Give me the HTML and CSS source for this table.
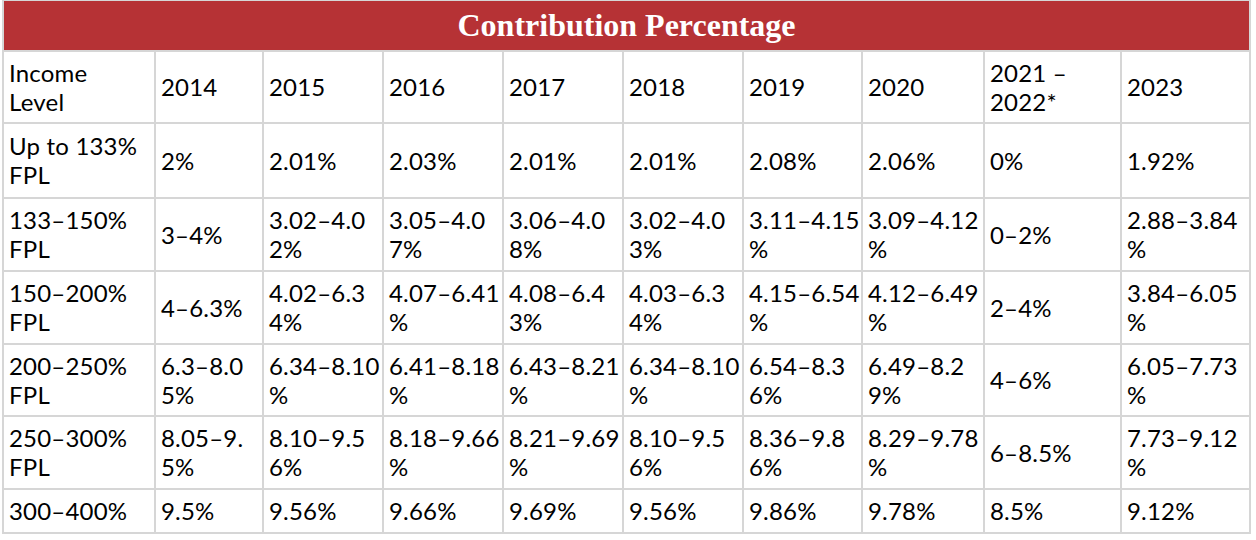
FILE: index.html
```html
<!DOCTYPE html>
<html lang="en">
<head>
<meta charset="utf-8">
<title>Contribution Percentage</title>
<link rel="stylesheet" href="styles.css">
</head>
<body>
<table class="contrib">
  <colgroup>
    <col class="c-label">
    <col class="c-108">
    <col class="c-120"><col class="c-120"><col class="c-120"><col class="c-120">
    <col class="c-119">
    <col class="c-122">
    <col class="c-137">
    <col class="c-129">
  </colgroup>
  <thead>
    <tr class="r-title"><th colspan="10" class="title">Contribution Percentage</th></tr>
  </thead>
  <tbody>
    <tr class="r-head">
      <td>Income<br>Level</td><td>2014</td><td>2015</td><td>2016</td><td>2017</td><td>2018</td><td>2019</td><td>2020</td><td>2021 –<br>2022*</td><td>2023</td>
    </tr>
    <tr class="r-2">
      <td>Up to 133%<br>FPL</td><td>2%</td><td>2.01%</td><td>2.03%</td><td>2.01%</td><td>2.01%</td><td>2.08%</td><td>2.06%</td><td>0%</td><td>1.92%</td>
    </tr>
    <tr class="r-3">
      <td>133–150%<br>FPL</td><td>3–4%</td><td>3.02–4.0<br>2%</td><td>3.05–4.0<br>7%</td><td>3.06–4.0<br>8%</td><td>3.02–4.0<br>3%</td><td>3.11–4.15<br>%</td><td>3.09–4.12<br>%</td><td>0–2%</td><td>2.88–3.84<br>%</td>
    </tr>
    <tr class="r-4">
      <td>150–200%<br>FPL</td><td>4–6.3%</td><td>4.02–6.3<br>4%</td><td>4.07–6.41<br>%</td><td>4.08–6.4<br>3%</td><td>4.03–6.3<br>4%</td><td>4.15–6.54<br>%</td><td>4.12–6.49<br>%</td><td>2–4%</td><td>3.84–6.05<br>%</td>
    </tr>
    <tr class="r-5">
      <td>200–250%<br>FPL</td><td>6.3–8.0<br>5%</td><td>6.34–8.10<br>%</td><td>6.41–8.18<br>%</td><td>6.43–8.21<br>%</td><td>6.34–8.10<br>%</td><td>6.54–8.3<br>6%</td><td>6.49–8.2<br>9%</td><td>4–6%</td><td>6.05–7.73<br>%</td>
    </tr>
    <tr class="r-6">
      <td>250–300%<br>FPL</td><td>8.05–9.<br>5%</td><td>8.10–9.5<br>6%</td><td>8.18–9.66<br>%</td><td>8.21–9.69<br>%</td><td>8.10–9.5<br>6%</td><td>8.36–9.8<br>6%</td><td>8.29–9.78<br>%</td><td>6–8.5%</td><td>7.73–9.12<br>%</td>
    </tr>
    <tr class="r-7">
      <td>300–400%</td><td>9.5%</td><td>9.56%</td><td>9.66%</td><td>9.69%</td><td>9.56%</td><td>9.86%</td><td>9.78%</td><td>8.5%</td><td>9.12%</td>
    </tr>
  </tbody>
</table>
</body>
</html>
```

FILE: styles.css
```css
html, body {
  margin: 0;
  padding: 0;
  background: #ffffff;
}

.contrib {
  margin: 0 0 0 2px;
  width: 1249px;
  table-layout: fixed;
  border-collapse: collapse;
  font-family: "Lato", "Liberation Sans", sans-serif;
  font-size: 24px;
  letter-spacing: 0.2px;
  line-height: 29px;
  color: #000000;
}

.c-label { width: 152px; }
.c-108 { width: 108px; }
.c-120 { width: 120px; }
.c-119 { width: 119px; }
.c-122 { width: 122px; }
.c-137 { width: 137px; }
.c-129 { width: 129px; }

.contrib td,
.contrib th {
  border: 2px solid #d6d6d6;
  padding: 0 0 0 5px;
  vertical-align: middle;
  text-align: left;
  white-space: nowrap;
  overflow: hidden;
}

.contrib th.title {
  background: #b63235;
  color: #ffffff;
  font-family: "Liberation Serif", "Times New Roman", serif;
  font-weight: bold;
  font-size: 32px;
  letter-spacing: 0;
  line-height: 36px;
  text-align: center;
  padding: 0;
  border-top-width: 1px;
}

.r-title { height: 50px; }
.r-head { height: 72px; }
.r-2 { height: 75px; }
.r-3 { height: 73px; }
.r-4 { height: 73px; }
.r-5 { height: 72px; }
.r-6 { height: 73px; }
.r-7 { height: 44px; }
```
